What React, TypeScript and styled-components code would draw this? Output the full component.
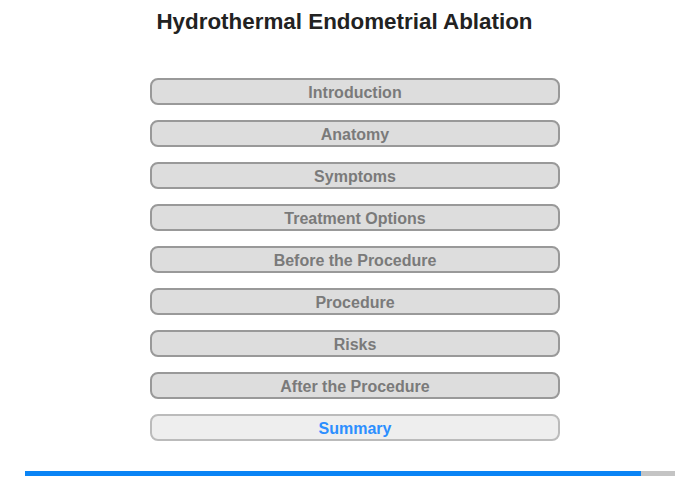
import * as React from 'react';
import styled, { createGlobalStyle } from 'styled-components';

const GlobalStyle = createGlobalStyle`
    html, body {
        margin: 0;
        padding: 0;
        background: #ffffff;
        font-family: "Liberation Sans", Arial, sans-serif;
    }
`;

const Page = styled.div`
    width: 700px;
    height: 480px;
    display: flex;
    flex-direction: column;
`;

const Title = styled.h1`
    margin: 0;
    padding: 9px 11px 0 0;
    height: 41px;
    text-align: center;
    font-size: 22.4px;
    line-height: 26px;
    font-weight: bold;
    color: #222222;
`;

const Menu = styled.nav`
    width: 410px;
    margin: 28px 0 0 150px;
    display: flex;
    flex-direction: column;
    gap: 15px;
`;

const MenuButton = styled.div<{ $active?: boolean }>`
    box-sizing: border-box;
    height: 27px;
    border: 2px solid ${(p) => (p.$active ? '#bbbbbb' : '#999999')};
    border-radius: 8px;
    background: ${(p) => (p.$active ? '#eeeeee' : '#dddddd')};
    color: ${(p) => (p.$active ? '#2c8fff' : '#7a7a7a')};
    font-size: 16px;
    font-weight: bold;
    line-height: 25px;
    text-align: center;
    cursor: pointer;
`;

const ProgressTrack = styled.div`
    width: 650px;
    height: 5px;
    margin: 30px 0 0 25px;
    background: #c4c4c4;
    display: flex;
`;

const ProgressFill = styled.div`
    height: 100%;
    background: #0a84f5;
`;

const sections = [
    'Introduction',
    'Anatomy',
    'Symptoms',
    'Treatment Options',
    'Before the Procedure',
    'Procedure',
    'Risks',
    'After the Procedure',
    'Summary',
];

export default function App() {
    const current = sections.length - 1;
    const progress = 616 / 650;

    return (
        <Page>
            <GlobalStyle />
            <Title>Hydrothermal Endometrial Ablation</Title>
            <Menu>
                {sections.map((s, i) => (
                    <MenuButton key={s} $active={i === current}>{s}</MenuButton>
                ))}
            </Menu>
            <ProgressTrack>
                <ProgressFill style={{ width: `${progress * 100}%` }} />
            </ProgressTrack>
        </Page>
    );
}
